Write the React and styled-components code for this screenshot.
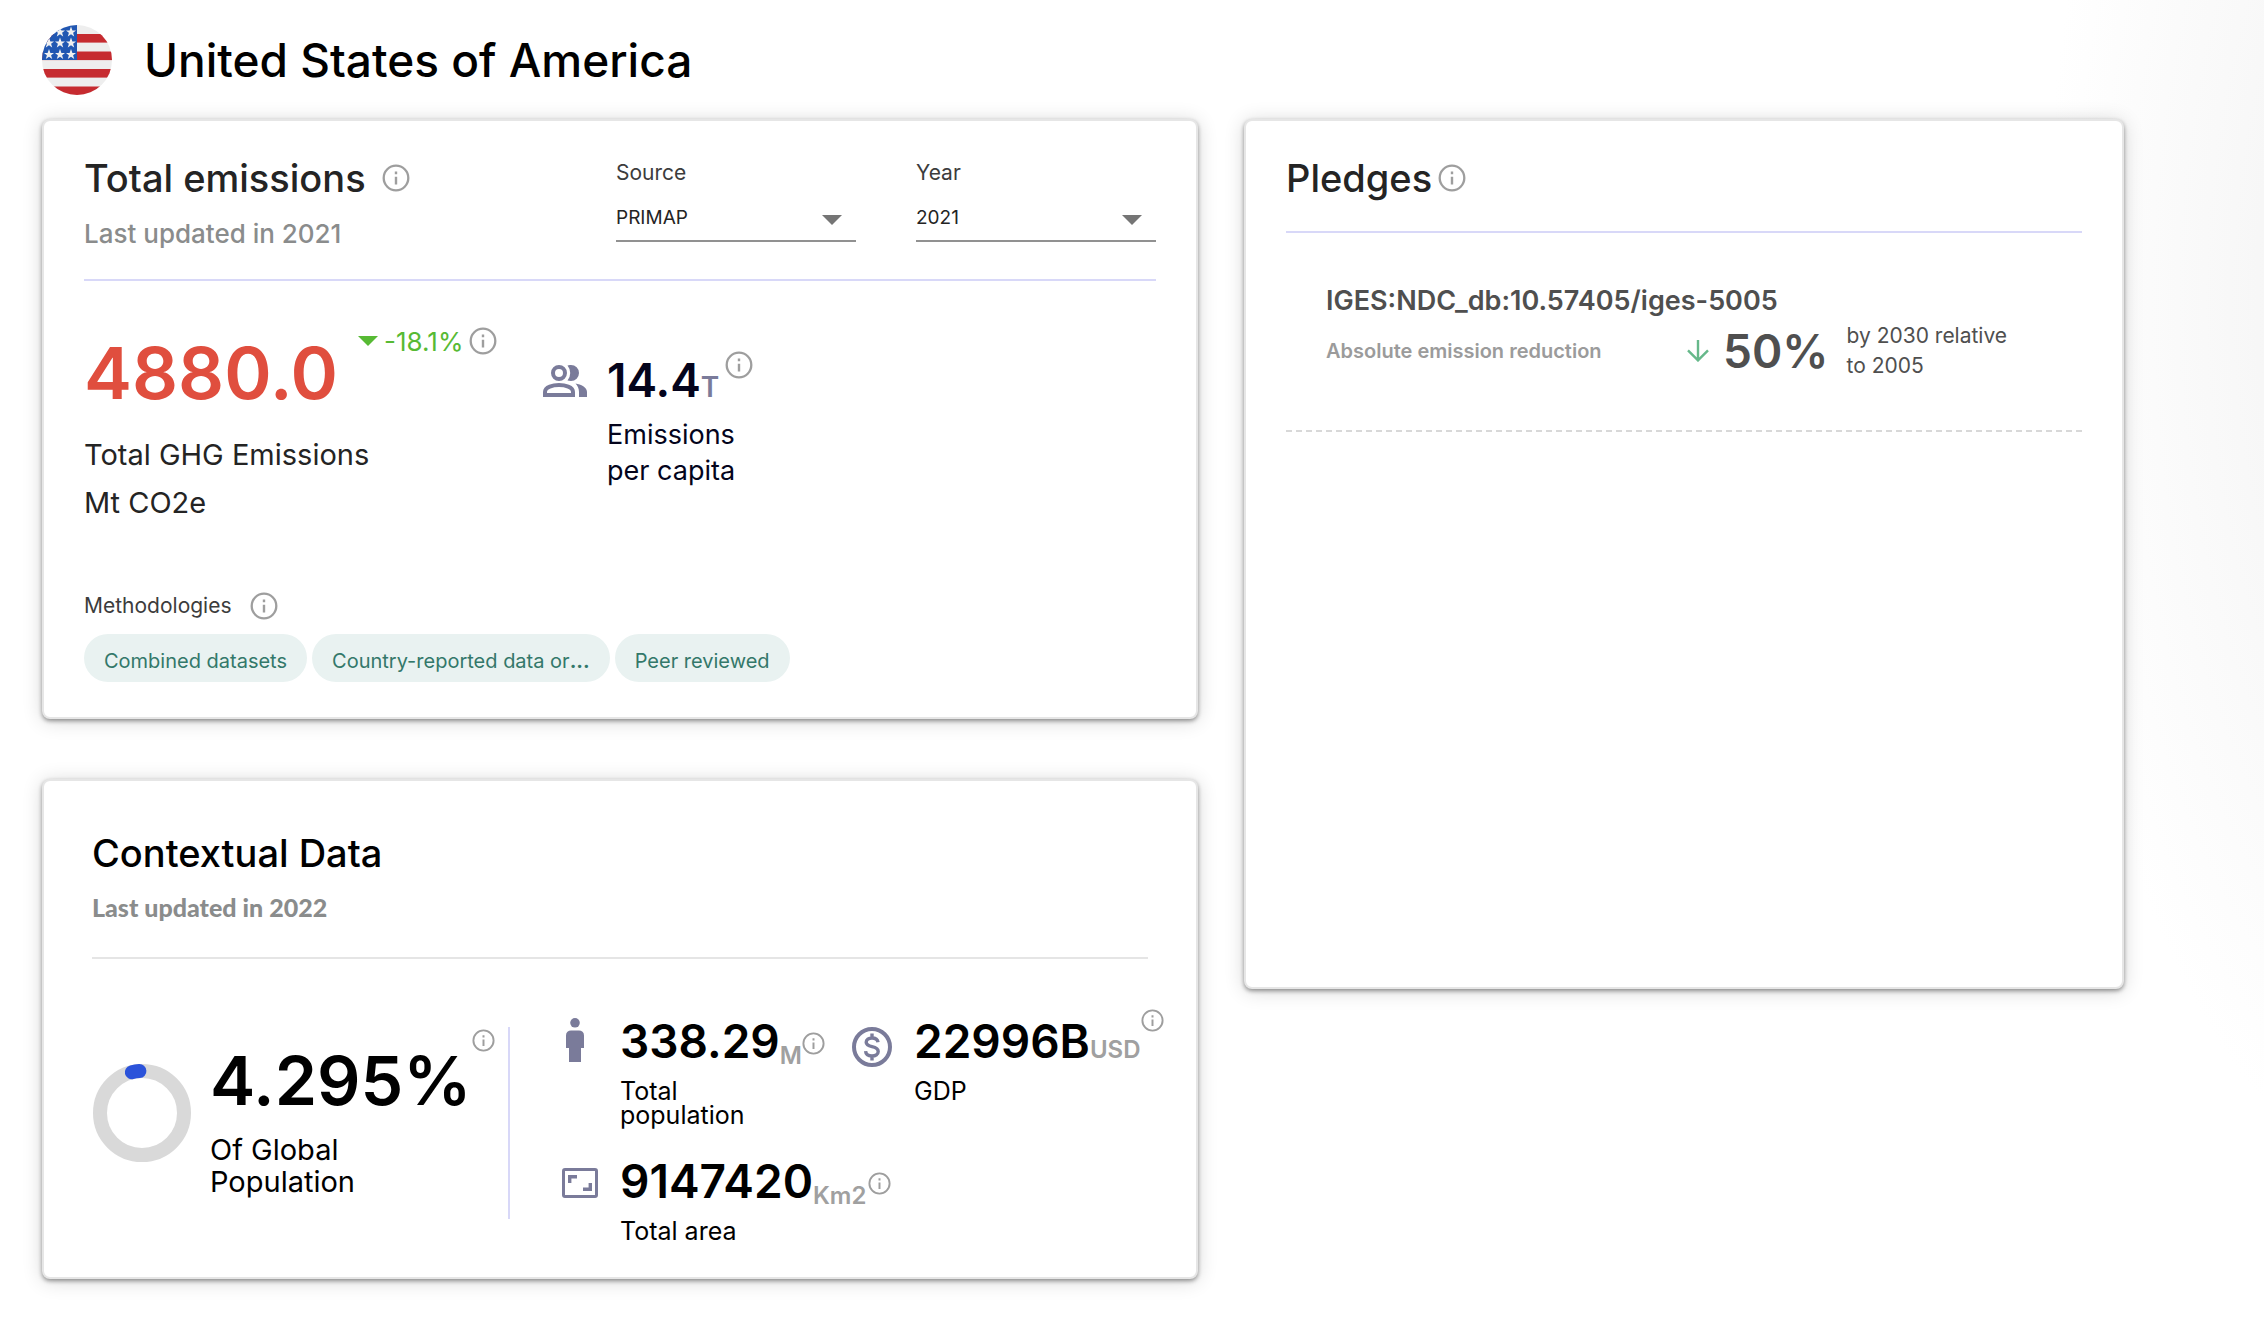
import React from "react";
import styled, { createGlobalStyle } from "styled-components";

const Global = createGlobalStyle`
  *, *::before, *::after { box-sizing: border-box; }
  body {
    margin: 0;
    min-height: 100vh;
    background: radial-gradient(ellipse 400px 900px at calc(100% + 180px) 300px, #f0f0f0, #ffffff) #ffffff;
    font-family: Inter, "Liberation Sans", sans-serif;
    color: #000000;
  }
  h1, h2, h3, p, ul { margin: 0; padding: 0; }
`;

const Page = styled.main`
  padding: 24px 140px 54px 42px;
`;

const Header = styled.header`
  display: flex;
  align-items: center;
  gap: 32px;
  height: 72px;
  margin-bottom: 23px;
`;

const CountryName = styled.h1`
  font-size: 46px;
  line-height: 56px;
  font-weight: 500;
`;

const Columns = styled.div`
  display: grid;
  grid-template-columns: minmax(0, 1156fr) minmax(0, 880fr);
  align-items: start;
  gap: 46px;
`;

const Stack = styled.div`
  display: grid;
  grid-template-columns: minmax(0, 1fr);
  gap: 60px;
`;

const Card = styled.section`
  min-height: ${(p) => p.$min || 0}px;
  padding: ${(p) => p.$pad};
  border: 2px solid #e6e6e6;
  border-radius: 8px;
  background: #ffffff;
  box-shadow: 0 2px 4px rgba(0, 0, 0, 0.4), 0 2px 20px rgba(0, 0, 0, 0.16);
`;

const CardHead = styled.div`
  display: flex;
  justify-content: space-between;
  padding-bottom: ${(p) => p.$bottom}px;
  border-bottom: 2px solid ${(p) => p.$line || "#d8d8f8"};
`;

const TitleRow = styled.div`
  display: flex;
  align-items: center;
  gap: ${(p) => p.$gap || 6}px;
`;

const Title = styled.h2`
  font-size: 38px;
  line-height: 48px;
  font-weight: 500;
  color: ${(p) => p.$color || "#242424"};
`;

const Updated = styled.p`
  margin-top: ${(p) => (p.$heavy ? 14 : 16)}px;
  font-family: ${(p) => (p.$heavy ? "Lato, sans-serif" : "inherit")};
  font-size: ${(p) => (p.$heavy ? 25 : 26)}px;
  line-height: 32px;
  font-weight: ${(p) => (p.$heavy ? 900 : 500)};
  color: #8a8c8c;
`;

const Fields = styled.div`
  display: flex;
  gap: 60px;
  padding-top: 7px;
`;

const Field = styled.div`
  display: flex;
  flex-direction: column;
  gap: 14px;
  width: 240px;
`;

const FieldLabel = styled.label`
  font-size: 21px;
  line-height: 24px;
  color: #3c3c3c;
`;

const SelectBox = styled.div`
  display: flex;
  align-items: center;
  padding-right: 14px;
  border-bottom: 2px solid #919191;
`;

const Select = styled.select`
  flex: 1;
  height: 41px;
  padding: 0 0 4px;
  border: 0;
  background: transparent;
  appearance: none;
  font: 400 19px/28px Inter, sans-serif;
  color: #242424;
`;

const InfoButton = styled.button`
  display: flex;
  flex: none;
  padding: 0;
  border: 0;
  background: none;
  align-self: ${(p) => p.$align || "auto"};
  margin: ${(p) => p.$margin || 0};
`;

const Stats = styled.div`
  display: flex;
  align-items: flex-start;
  gap: 48px;
  padding-top: 44px;
`;

const TotalStat = styled.div`
  width: 411px;
`;

const TotalRow = styled.div`
  display: flex;
  align-items: flex-start;
  gap: 20px;
`;

const Total = styled.strong`
  font-size: 72px;
  line-height: 96px;
  font-weight: 600;
  color: #e04e3e;
`;

const Change = styled.span`
  display: flex;
  align-items: center;
  gap: 6px;
  height: 32px;
  font-size: 26px;
  color: #57ba34;
`;

const TotalLabel = styled.p`
  margin-top: 10px;
  font-size: 29px;
  line-height: 48px;
  color: #242424;
`;

const Capita = styled.div`
  display: flex;
  gap: 20px;
  padding-top: 23px;
`;

const Value = styled.div`
  display: flex;
  align-items: baseline;
  font-size: 46px;
  line-height: ${(p) => p.$line || 46}px;
  font-weight: 600;
  color: ${(p) => p.$color || "#000000"};
`;

const Unit = styled.span`
  font-size: ${(p) => p.$size || 24}px;
  line-height: 16px;
  font-weight: 600;
  color: ${(p) => p.$color || "#a0a0a0"};
  align-self: ${(p) => (p.$low ? "flex-end" : "auto")};
`;

const CapitaLabel = styled.p`
  margin-top: 5px;
  font-size: 27px;
  line-height: 36px;
  color: #04041c;
`;

const Methods = styled.div`
  padding-top: 63px;
`;

const MethodsTitle = styled.h3`
  font-size: 21px;
  line-height: 32px;
  font-weight: 400;
  color: #3c3c3c;
`;

const Chips = styled.ul`
  display: flex;
  gap: 5px;
  margin-top: 12px;
  list-style: none;
`;

const Chip = styled.li`
  height: 48px;
  padding: 4px 20px 0;
  border-radius: 24px;
  background: #e9f2f1;
  font-size: 20px;
  line-height: 46px;
  color: #33786a;
`;

const Context = styled.div`
  display: flex;
  align-items: flex-start;
  padding-top: 59px;
`;

const Share = styled.div`
  display: flex;
  flex: none;
  width: 418px;
  min-height: 192px;
  margin-top: 9px;
  border-right: 2px solid #d8d8f8;
`;

const Ring = styled.svg`
  flex: none;
  margin: 36px 18px 0 0;
`;

const ShareValue = styled.strong`
  display: block;
  margin-top: 5px;
  font-size: 68px;
  line-height: 96px;
  font-weight: 600;
`;

const ShareLabel = styled.p`
  margin-top: 6px;
  font-size: 29px;
  line-height: 32px;
  max-width: 200px;
`;

const Facts = styled.div`
  display: grid;
  grid-template-columns: 290px auto;
  row-gap: 31px;
  margin-left: 52px;
`;

const Fact = styled.div`
  display: flex;
  grid-column: ${(p) => (p.$wide ? "1 / -1" : "auto")};
`;

const IconSlot = styled.span`
  display: flex;
  flex: none;
  justify-content: center;
  width: ${(p) => p.$w}px;
  margin-right: ${(p) => p.$gap || 0}px;
  padding-top: ${(p) => p.$top || 0}px;
`;

const FactLabel = styled.p`
  margin-top: 15px;
  max-width: 160px;
  font-size: 25px;
  line-height: 24px;
`;

const Pledge = styled.article`
  padding: 50px 40px 49px;
  background: repeating-linear-gradient(to right, #d8d8d8 0 6px, transparent 6px 10px) bottom / 100% 2px no-repeat;
`;

const PledgeName = styled.h3`
  font-size: 27px;
  line-height: 36px;
  font-weight: 600;
  color: #4f4f4f;
`;

const PledgeRow = styled.div`
  display: flex;
  align-items: center;
  height: 64px;
`;

const PledgeKind = styled.span`
  width: 361px;
  font-size: 20px;
  font-weight: 600;
  color: #9b9b9b;
`;

const PledgeAmount = styled.strong`
  margin: 0 18px 0 14px;
  font-size: 46px;
  font-weight: 600;
  color: #4f4f4f;
`;

const PledgeTarget = styled.span`
  max-width: 170px;
  font-size: 21px;
  line-height: 30px;
  color: #4f4f4f;
`;

function Info({ size = 28, about, ...rest }) {
  return (
    <InfoButton type="button" aria-label={"About " + about} {...rest}>
      <svg width={size} height={size} viewBox="0 0 28 28" fill="none" stroke="#9e9e9e">
        <circle cx="14" cy="14" r="12.3" strokeWidth="2.3" />
        <path d="M14 12.8V20.6M14 7.6V10.2" strokeWidth="2.4" />
      </svg>
    </InfoButton>
  );
}

function Star({ x, y }) {
  return (
    <path
      transform={`translate(${x} ${y})`}
      fill="#f0f0f0"
      d="M0-5.4 1.4-1.6 5-1.6 2.1.7 3.2 4.6 0 2.3-3.2 4.6-2.1.7-5-1.6-1.4-1.6Z"
    />
  );
}

function Flag() {
  const stars = [
    [18, 7], [29, 7],
    [7, 18], [18, 18], [29, 18],
    [7, 29.5], [18, 29.5], [29, 29.5],
  ];
  return (
    <svg width="70" height="70" viewBox="0 0 70 70" role="img" aria-label="Flag of the United States">
      <clipPath id="disc"><circle cx="35" cy="35" r="35" /></clipPath>
      <g clipPath="url(#disc)">
        <rect width="70" height="70" fill="#eeeeee" />
        {[9, 26.5, 44, 61.5].map((y) => (
          <rect key={y} y={y} width="70" height="8.6" fill="#c62b30" />
        ))}
        <rect width="35" height="35" fill="#2157b2" />
        {stars.map(([x, y]) => <Star key={x + "-" + y} x={x} y={y} />)}
      </g>
    </svg>
  );
}

function Triangle({ color }) {
  return (
    <svg width="20" height="10" viewBox="0 0 20 10" aria-hidden="true">
      <path d="M0 0H20L10 10Z" fill={color} />
    </svg>
  );
}

const ink = "#7a7b9a";

function PeopleIcon() {
  return (
    <svg width="44" height="32" viewBox="0 0 44 32" aria-hidden="true">
      <g fill="none" stroke={ink} strokeWidth="4">
        <circle cx="16" cy="8" r="6" />
        <path d="M2 30V27C2 22 10 20 16 20S30 22 30 27V30Z" />
      </g>
      <path fill={ink} d="M24.5.4C26 0 28 0 28 0A8 8 0 0 1 28 16C26.6 16 25.6 15.9 24.5 15.6A12 12 0 0 0 24.5.4ZM32.5 18.4C38 19.4 44 22 44 27V32H36V27C36 23.4 34.6 20.6 32.5 18.4Z" />
    </svg>
  );
}

function PersonIcon() {
  return (
    <svg width="18" height="44" viewBox="0 0 18 44" aria-hidden="true" fill={ink}>
      <circle cx="9" cy="4.8" r="4.8" />
      <path d="M5 12.4H13A5 5 0 0 1 18 17.4V30H15V44H3V30H0V17.4A5 5 0 0 1 5 12.4Z" />
    </svg>
  );
}

function DollarIcon() {
  return (
    <svg width="40" height="40" viewBox="0 0 40 40" aria-hidden="true" fill="none" stroke={ink}>
      <circle cx="20" cy="20" r="18" strokeWidth="4" />
      <path strokeWidth="3.4" d="M26 15.2C25.6 12.4 23.2 11 20 11 16.6 11 14.2 12.7 14.2 15.3 14.2 21.6 26.2 17.6 26.2 24.5 26.2 27.3 23.6 29 20 29 16.2 29 13.8 27.2 13.6 24.2M20 6.6V11M20 29V33.4" />
    </svg>
  );
}

function AreaIcon() {
  return (
    <svg width="36" height="30" viewBox="0 0 36 30" aria-hidden="true" fill="none" stroke={ink} strokeWidth="3">
      <rect x="1.5" y="1.5" width="33" height="27" rx="1.5" />
      <path strokeWidth="3.4" d="M7.7 15V8.7H15M28.3 15V21.3H21" />
    </svg>
  );
}

function ArrowDown() {
  return (
    <svg width="22" height="22" viewBox="0 0 22 22" aria-hidden="true" fill="none" stroke="#66b88a" strokeWidth="2.4">
      <path d="M11 0V20M1 10.4 11 20.4 21 10.4" />
    </svg>
  );
}

function Dropdown({ id, label, value }) {
  return (
    <Field>
      <FieldLabel htmlFor={id}>{label}</FieldLabel>
      <SelectBox>
        <Select id={id} defaultValue={value}>
          <option value={value}>{value}</option>
        </Select>
        <Triangle color="#757575" />
      </SelectBox>
    </Field>
  );
}

export default function App() {
  return (
    <>
      <Global />
      <Page>
        <Header>
          <Flag />
          <CountryName>United States of America</CountryName>
        </Header>
        <Columns>
          <Stack>
            <Card $pad="33px 40px 35px">
              <CardHead $bottom={29}>
                <div>
                  <TitleRow $gap={16}>
                    <Title>Total emissions</Title>
                    <Info about="total emissions" />
                  </TitleRow>
                  <Updated>Last updated in 2021</Updated>
                </div>
                <Fields>
                  <Dropdown id="source" label="Source" value="PRIMAP" />
                  <Dropdown id="year" label="Year" value="2021" />
                </Fields>
              </CardHead>
              <Stats>
                <TotalStat>
                  <TotalRow>
                    <Total>4880.0</Total>
                    <Change>
                      <Triangle color="#57ba34" />
                      -18.1%
                      <Info about="the change" />
                    </Change>
                  </TotalRow>
                  <TotalLabel>Total GHG Emissions<br />Mt CO2e</TotalLabel>
                </TotalStat>
                <Capita>
                  <IconSlot $w={44} $top={17}><PeopleIcon /></IconSlot>
                  <div>
                    <Value $line={64} $color="#04041c">
                      14.4
                      <Unit $size={28} $color={ink}>T</Unit>
                      <Info about="emissions per capita" $align="flex-start" $margin="3px 0 0 6px" />
                    </Value>
                    <CapitaLabel>Emissions<br />per capita</CapitaLabel>
                  </div>
                </Capita>
              </Stats>
              <Methods>
                <TitleRow $gap={18}>
                  <MethodsTitle>Methodologies</MethodsTitle>
                  <Info about="methodologies" />
                </TitleRow>
                <Chips>
                  <Chip>Combined datasets</Chip>
                  <Chip>Country-reported data or<b>...</b></Chip>
                  <Chip>Peer reviewed</Chip>
                </Chips>
              </Methods>
            </Card>
            <Card $pad="48px 48px 34px">
              <CardHead $bottom={34} $line="#e5e5e5">
                <div>
                  <Title $color="#000000">Contextual Data</Title>
                  <Updated $heavy>Last updated in 2022</Updated>
                </div>
              </CardHead>
              <Context>
                <Share>
                  <Ring width="100" height="100" viewBox="-50 -50 100 100" fill="none" role="img" aria-label="4.295% of global population">
                    <circle r="42" stroke="#d9d9d9" strokeWidth="14" />
                    <path d="M-2.6-41.9A42 42 0 0 0-10.2-40.7" stroke="#2b53da" strokeWidth="14" strokeLinecap="round" />
                  </Ring>
                  <div>
                    <ShareValue>4.295%</ShareValue>
                    <ShareLabel>Of Global Population</ShareLabel>
                  </div>
                  <Info size={23} about="share of population" $align="flex-start" $margin="2px 0 0" />
                </Share>
                <Facts>
                  <Fact>
                    <IconSlot $w={26} $gap={32}><PersonIcon /></IconSlot>
                    <div>
                      <Value>
                        338.29
                        <Unit $low>M</Unit>
                        <Info size={23} about="total population" $align="flex-start" $margin="14px 0 0" />
                      </Value>
                      <FactLabel>Total population</FactLabel>
                    </div>
                  </Fact>
                  <Fact>
                    <IconSlot $w={40} $gap={22} $top={9}><DollarIcon /></IconSlot>
                    <div>
                      <Value>
                        22996B
                        <Unit>USD</Unit>
                        <Info size={23} about="GDP" $align="flex-start" $margin="-9px 0 0" />
                      </Value>
                      <FactLabel>GDP</FactLabel>
                    </div>
                  </Fact>
                  <Fact $wide>
                    <IconSlot $w={36} $gap={22} $top={10}><AreaIcon /></IconSlot>
                    <div>
                      <Value>
                        9147420
                        <Unit $low>Km2</Unit>
                        <Info size={23} about="total area" $align="flex-start" $margin="14px 0 0 2px" />
                      </Value>
                      <FactLabel>Total area</FactLabel>
                    </div>
                  </Fact>
                </Facts>
              </Context>
            </Card>
          </Stack>
          <Card $min={870} $pad="33px 40px 40px">
            <CardHead $bottom={29}>
              <TitleRow>
                <Title>Pledges</Title>
                <Info about="pledges" />
              </TitleRow>
            </CardHead>
            <Pledge>
              <PledgeName>IGES:NDC_db:10.57405/iges-5005</PledgeName>
              <PledgeRow>
                <PledgeKind>Absolute emission reduction</PledgeKind>
                <ArrowDown />
                <PledgeAmount>50%</PledgeAmount>
                <PledgeTarget>by 2030 relative to 2005</PledgeTarget>
              </PledgeRow>
            </Pledge>
          </Card>
        </Columns>
      </Page>
    </>
  );
}
